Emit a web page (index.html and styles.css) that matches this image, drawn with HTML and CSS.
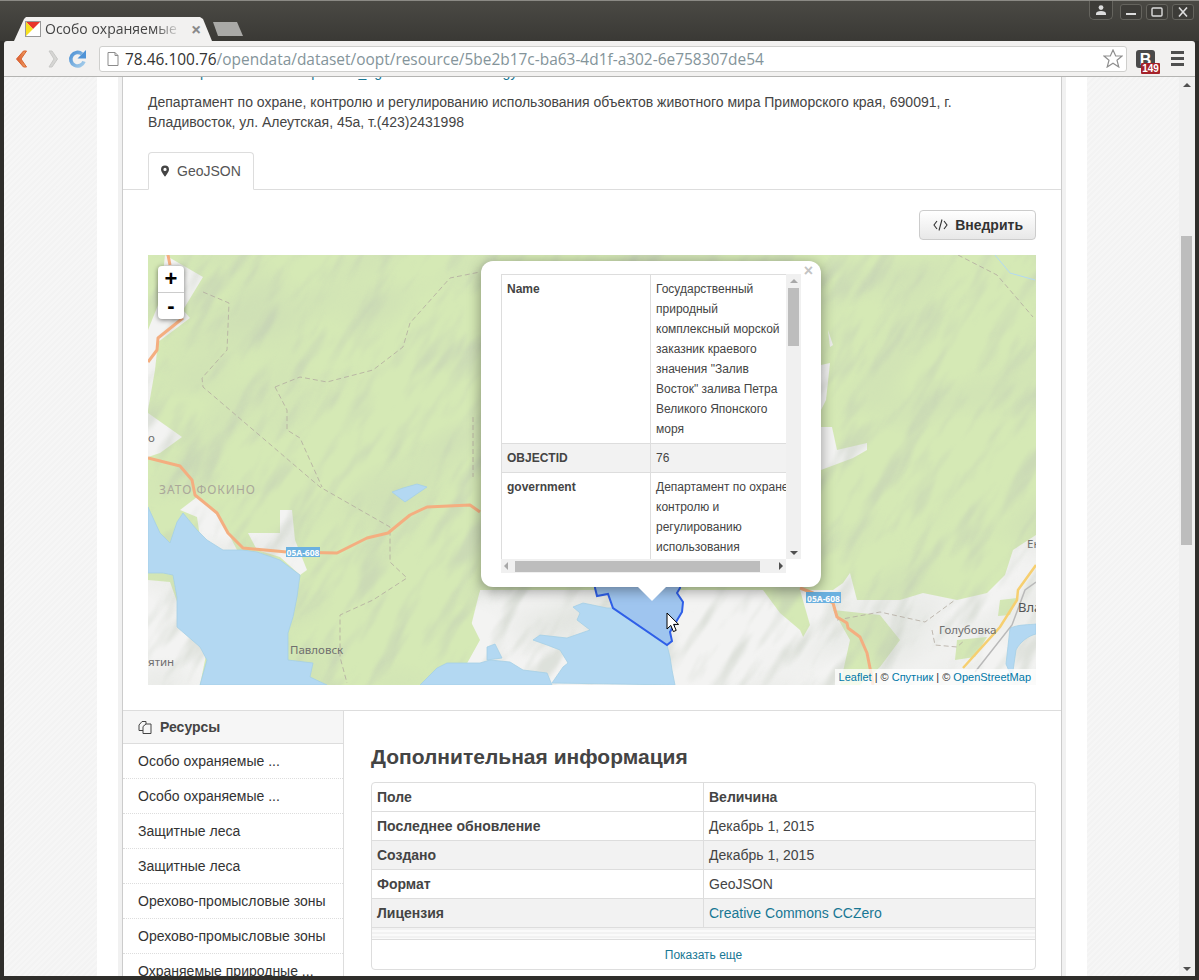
FILE: index.html
```html
<!DOCTYPE html>
<html lang="en">
<head>
    <meta charset="UTF-8">
    <title>Особо охраняемые</title>
    <link rel="stylesheet" href="styles.css">
</head>
<body>
<div class="window">
    <div class="titlebar">
        <div class="tab">
            <svg class="favicon" viewBox="0 0 16 16" width="16" height="16">
                <rect width="16" height="16" fill="#fff"/>
                <path d="M0 0H16L8 8Z" fill="#e8352c"/>
                <path d="M0 0V16L8 8Z" fill="#f7e11d"/>
                <rect x=".5" y=".5" width="15" height="15" fill="none" stroke="#999"/>
            </svg>
            <span class="tab-title">Особо охраняемые</span>
            <span class="tab-close">×</span>
        </div>
        <div class="newtab"></div>
        <div class="winbtns">
            <div class="winbtn winbtn-user">
                <svg viewBox="0 0 12 10" width="12" height="10"><circle cx="6" cy="2.6" r="2.4" fill="#ddd"/><path d="M1 10V8.5C1 7 3 6 6 6s5 1 5 2.5V10Z" fill="#ddd"/></svg>
            </div>
            <div class="winbtn"><svg viewBox="0 0 12 10" width="12" height="10"><rect x="1" y="6" width="10" height="2" fill="#ddd"/></svg></div>
            <div class="winbtn"><svg viewBox="0 0 12 10" width="12" height="10"><rect x="1" y="1" width="10" height="8" rx="1" fill="none" stroke="#ddd" stroke-width="1.4"/></svg></div>
            <div class="winbtn"><svg viewBox="0 0 12 10" width="12" height="10"><path d="M2 .5L10 9.5M10 .5L2 9.5" stroke="#ddd" stroke-width="1.6"/></svg></div>
        </div>
    </div>

    <div class="toolbar">
        <svg class="nav" viewBox="0 0 20 20" width="20" height="20">
            <defs>
                <linearGradient id="backfill" x1="0" y1="0" x2="1" y2="0"><stop offset="0" stop-color="#d9532a"/><stop offset="1" stop-color="#f0a868"/></linearGradient>
            </defs>
            <path d="M13.5 2L6.5 10L13.5 18H16.5L11 10L16.5 2Z" fill="url(#backfill)" stroke="#d9622f" stroke-width="1"/>
        </svg>
        <svg class="nav nav-forward" viewBox="0 0 20 20" width="20" height="20"><path d="M7 2H10L15.5 10L10 18H7L12 10Z" fill="#d6d6d4" stroke="#c8c8c6" stroke-width="1"/></svg>
        <svg class="nav nav-reload" viewBox="0 0 20 20" width="20" height="20">
            <defs>
                <linearGradient id="reloadfill" x1="0" y1="0" x2="1" y2="1"><stop offset="0" stop-color="#4f93d6"/><stop offset="1" stop-color="#a5cdea"/></linearGradient>
            </defs>
            <path d="M17 12.5A6.8 6.8 0 1 1 15 5" fill="none" stroke="url(#reloadfill)" stroke-width="3.6"/>
            <path d="M19 1V9.5H10.5Z" fill="#4f93d6"/>
        </svg>
        <div class="omnibox">
            <svg viewBox="0 0 12 14" width="12" height="14"><path d="M1 .5H8L11 3.5V13.5H1Z" fill="#fff" stroke="#8c8c8c"/><path d="M8 .5V3.5H11" fill="none" stroke="#8c8c8c"/></svg>
            <span class="url"><b>78.46.100.76</b>/opendata/dataset/oopt/resource/5be2b17c-ba63-4d1f-a302-6e758307de54</span>
            <svg class="star" viewBox="0 0 20 19" width="20" height="19"><path d="M10 1L12.7 7H19L14 11.2L15.8 18L10 14.2L4.2 18L6 11.2L1 7H7.3Z" fill="#fff" stroke="#8f8f8f" stroke-width="1.2"/></svg>
        </div>
        <div class="ext">
            <span class="ext-b">B</span>
            <span class="ext-badge">149</span>
        </div>
        <div class="menu"><i></i><i></i><i></i></div>
    </div>

    <div class="viewport">
        <div class="page">
            <div class="shell">
                <div class="wrapper">
                    <div class="box">
                        <p class="clipped">Web: <a href="#">http://www.admin.ru/proman_egais/document/ecology</a></p>
                        <p class="about">Департамент по охране, контролю и регулированию использования объектов животного мира Приморского края, 690091, г. Владивосток, ул. Алеутская, 45а, т.(423)2431998</p>

                        <div class="tabs">
                            <div class="tab-item">
                                <svg viewBox="0 0 10 14" width="8" height="12"><path d="M5 0A5 5 0 0 0 0 5C0 8 5 14 5 14S10 8 10 5A5 5 0 0 0 5 0ZM5 7A2 2 0 1 1 5 3A2 2 0 0 1 5 7Z" fill="#444"/></svg>
                                GeoJSON
                            </div>
                        </div>

                        <div class="preview">
                            <div class="actions">
                                <button class="btn">
                                    <svg viewBox="0 0 15 12" width="15" height="12"><path d="M4 2L1 6L4 10M11 2L14 6L11 10M9 .5L6 11.5" fill="none" stroke="#333" stroke-width="1.1"/></svg>
                                    Внедрить
                                </button>
                            </div>

                            <div class="map">
                                <svg class="map-svg" viewBox="148 255 888 430" width="888" height="430">
                                    <defs>
                                        <filter id="ridges" x="0" y="0" width="100%" height="100%">
                                            <feTurbulence type="fractalNoise" baseFrequency="0.014 0.06" numOctaves="3" seed="7"/>
                                            <feColorMatrix values="0 0 0 0 .5  0 0 0 0 .55  0 0 0 0 .47  3.6 0 0 0 -1.75"/>
                                            <feGaussianBlur stdDeviation=".8"/>
                                        </filter>
                                        <filter id="massif" x="0" y="0" width="100%" height="100%">
                                            <feTurbulence type="fractalNoise" baseFrequency="0.007 0.014" numOctaves="2" seed="23"/>
                                            <feColorMatrix values="0 0 0 0 .5  0 0 0 0 .55  0 0 0 0 .47  3 0 0 0 -1.5"/>
                                        </filter>
                                        <filter id="soft"><feGaussianBlur stdDeviation=".5"/></filter>
                                    </defs>
                                    <rect x="148" y="255" width="888" height="430" fill="#d5e9b5"/>
                                    <g fill="#f3f3f2" filter="url(#soft)">
                                        <path d="M165 255L203 277L183 310L190 318L158 342L155 370L148 410V330L160 300Z"/>
                                        <path d="M148 413L182 437L160 453L148 457Z"/>
                                        <path d="M180 510L197 497L220 517L237 550L223 553L200 537L197 517Z"/>
                                        <path d="M280 510H292L295 540L307 570L300 575L280 557L257 550L248 533H280Z"/>
                                        <path d="M148 580L170 582L180 610L207 650L200 685H148Z"/>
                                        <path d="M821 365L830 363L826 400L821 410Z"/>
                                        <path d="M821 427H832L837 450L867 443V450L853 458L821 470Z"/>
                                        <path d="M828 330L833 345L830 347Z"/>
                                        <path d="M440 685L470 630L480 590H763L780 613L800 630L825 685Z"/>
                                        <path d="M1036 535L1013 550L1005 575L987 593L957 600L923 593L900 600L877 600L857 600L850 573L843 583L833 590L800 590L810 625L790 660L800 685H1036Z"/>
                                    </g>
                                    <g fill="#d5e9b5" filter="url(#soft)">
                                        <path d="M833 610L880 615L900 640L880 667L860 685H840L850 640Z"/>
                                        <path d="M957 640L987 637L975 657L955 660Z"/>
                                        <path d="M1000 600L1017 598L1010 615L998 616Z"/>
                                        <path d="M440 590H480L470 620L480 640L455 685H420Z"/>
                                    </g>
                                    <rect x="-400" y="-400" width="2000" height="1800" filter="url(#ridges)" opacity=".38" transform="rotate(-58 592 470)"/>
                                    <rect x="-100" y="0" width="1400" height="900" filter="url(#massif)" opacity=".28" transform="rotate(-30 592 470)"/>
                                    <g fill="#b3d8f2" stroke="#a4cfe6" stroke-width=".8" filter="url(#soft)">
                                        <path d="M148 507L160 533L170 543L177 522L183 513L197 530L207 540L223 550L243 550L257 552L280 560L300 575L297 597L293 617L288 633L288 660L313 663L310 677L327 685H200L207 660L200 647L177 627L177 597L173 575L163 573H148Z"/>
                                        <path d="M392 492L403 488L417 484L427 487L405 502Z"/>
                                        <path d="M420 685L437 668L447 663H480L490 660L510 662L523 670L547 673L552 685Z"/>
                                        <path d="M552 683L563 667L568 663L560 650L547 645L533 640L540 635L567 638L590 630L577 620L580 613L573 607L583 603L607 608L613 608L667 645L670 657L672 670L675 685Z"/>
                                        <path d="M487 647L495 644L502 658L487 660Z"/>
                                        <path d="M1010 628C1020 624 1030 625 1036 624V634C1028 636 1020 642 1016 650L1012 678L1006 664Z"/>
                                    </g>
                                    <path d="M995 255L1010 273L1035 280" fill="none" stroke="#b3d8f2"/>
                                    <g fill="none" stroke="#b3a9a0" stroke-width=".8" stroke-dasharray="5 3">
                                        <path d="M203 292L229 303L227 350L202 378L203 387L320 487L390 527L390 562L407 578L373 600L340 615L340 657L347 683"/>
                                        <path d="M275 387L287 410L287 430L300 438L322 487"/>
                                        <path d="M275 387L300 377L327 382L373 370L403 347L410 323L450 278L480 272"/>
                                        <path d="M473 417V477"/>
                                        <path d="M958 255L997 275L1033 317"/>
                                        <path d="M837 620L880 612L925 622L955 600"/>
                                        <path d="M932 630L935 645L957 647L965 640"/>
                                    </g>
                                    <g fill="none" stroke="#f4ae80" stroke-width="3" stroke-linejoin="round">
                                        <path d="M148 458L180 466L192 480L195 495L217 513L228 533L243 548L287 552L337 553L367 538L388 533L410 515L427 507L470 505L480 512"/>
                                        <path d="M168 255L170 265M183 318L158 338L157 350L148 362"/>
                                        <path d="M800 588L813 593L833 603L837 617L847 623L848 628L860 637L867 653L871 673L873 685"/>
                                    </g>
                                    <path d="M963 668L1000 627L1017 600L1018 590L1036 565" fill="none" stroke="#f6cf70" stroke-width="2.5"/>
                                    <path d="M975 672L1012 625L1025 590L1036 582" fill="none" stroke="#b9b9b9" stroke-width="1.5"/>
                                    <path d="M595 560L595 588L597 596L608 594L613 608L667 645L672 641L670 632L682 612L683 602L677 593L680 588L680 560Z" fill="#9fc5ef" stroke="#2f5fe8" stroke-width="2"/>
                                    <g class="map-label">
                                        <text class="map-faint" x="159" y="494">ЗАТО ФОКИНО</text>
                                        <text x="290" y="654">Павловск</text>
                                        <text x="148" y="666">ятин</text>
                                        <text x="148" y="442">о</text>
                                        <text x="939" y="634">Голубовка</text>
                                        <text class="map-big" x="1018" y="612">Вла</text>
                                        <text x="1027" y="548">Ек</text>
                                    </g>
                                    <rect x="286" y="547" width="34" height="10" fill="#6bb1e0"/>
                                    <rect x="806" y="592" width="35" height="11" fill="#6bb1e0"/>
                                    <text class="map-shield" x="303" y="555.5">05A-608</text>
                                    <text class="map-shield" x="823.5" y="601.5">05A-608</text>
                                </svg>

                                <div class="zoom">
                                    <span>+</span>
                                    <span>-</span>
                                </div>

                                <div class="attribution"><a href="#">Leaflet</a> | © <a href="#">Спутник</a> | © <a href="#">OpenStreetMap</a></div>

                                <div class="popup">
                                    <span class="popup-close">×</span>
                                    <div class="popup-scroll">
                                        <div class="popup-clip">
                                            <table class="popup-table">
                                                <tr>
                                                    <th>Name</th>
                                                    <td>Государственный<br>природный<br>комплексный морской<br>заказник краевого<br>значения "Залив<br>Восток" залива Петра<br>Великого Японского<br>моря</td>
                                                </tr>
                                                <tr class="odd">
                                                    <th>OBJECTID</th>
                                                    <td>76</td>
                                                </tr>
                                                <tr>
                                                    <th>government</th>
                                                    <td>Департамент по охране,<br>контролю и<br>регулированию<br>использования<br>объектов</td>
                                                </tr>
                                            </table>
                                        </div>
                                        <div class="sb-v">
                                            <i class="arrow-up"></i>
                                            <b></b>
                                            <i class="arrow-down"></i>
                                        </div>
                                        <div class="sb-h">
                                            <i class="arrow-left"></i>
                                            <b></b>
                                            <i class="arrow-right"></i>
                                        </div>
                                    </div>
                                    <div class="popup-tip"></div>
                                </div>

                                <svg class="cursor" viewBox="0 0 13 21" width="13" height="21"><path d="M1 1V17L4.8 13.4L7.4 19.6L10.2 18.4L7.6 12.4H12.6Z" fill="#fff" stroke="#000"/></svg>
                            </div>
                        </div>

                        <div class="columns">
                            <div class="sidebar">
                                <div class="sidebar-head">
                                    <svg viewBox="0 0 14 13" width="14" height="13"><path d="M5 9.5H1V4L4 .5H8V3" fill="none" stroke="#444"/><path d="M5 5.5L8 3H13V12.5H5Z" fill="none" stroke="#444"/></svg>
                                    Ресурсы
                                </div>
                                <ul class="res-list">
                                    <li>Особо охраняемые ...</li>
                                    <li>Особо охраняемые ...</li>
                                    <li>Защитные леса</li>
                                    <li>Защитные леса</li>
                                    <li>Орехово-промысловые зоны</li>
                                    <li>Орехово-промысловые зоны</li>
                                    <li>Охраняемые природные ...</li>
                                </ul>
                            </div>
                            <div class="details">
                                <h3>Дополнительная информация</h3>
                                <div class="info">
                                    <table class="info-table">
                                        <tr><th>Поле</th><th>Величина</th></tr>
                                        <tr><th>Последнее обновление</th><td>Декабрь 1, 2015</td></tr>
                                        <tr class="odd"><th>Создано</th><td>Декабрь 1, 2015</td></tr>
                                        <tr><th>Формат</th><td>GeoJSON</td></tr>
                                        <tr class="odd"><th>Лицензия</th><td><a href="#">Creative Commons CCZero</a></td></tr>
                                    </table>
                                    <div class="stripes"></div>
                                    <a class="show-more" href="#">Показать еще</a>
                                </div>
                            </div>
                        </div>
                    </div>
                </div>
            </div>
        </div>
        <div class="vscroll">
            <i class="arrow-up"></i>
            <b></b>
            <i class="arrow-down"></i>
        </div>
    </div>
</div>
</body>
</html>
```

FILE: styles.css
```css
html, body {
    margin: 0;
    height: 980px;
    overflow: hidden;
    background: #2f2e2b;
}
body {
    font-family: "Liberation Sans", Arial, sans-serif;
    font-size: 14px;
    line-height: 20px;
    color: #444;
}
a {
    color: #187794;
    text-decoration: none;
}

/* browser chrome */
.window {
    display: flex;
    flex-direction: column;
    height: 976px;
    padding: 0 4px;
}
.titlebar {
    display: flex;
    height: 41px;
    margin: 0 -4px;
    padding-left: 14px;
    box-sizing: border-box;
    border-top: 1px solid #8b8a85;
    background: linear-gradient(#4a4944, #3a3935);
}
.tab {
    display: flex;
    align-items: center;
    width: 198px;
    height: 24px;
    margin-top: 16px;
    padding-left: 11px;
    box-sizing: border-box;
    background: #f2f1f0;
    clip-path: polygon(0 100%, 10px 2px, 12px 0, 186px 0, 189px 2px, 198px 100%);
    font-family: "Open Sans", sans-serif;
    font-size: 14px;
    color: #444;
}
.favicon {
    flex: none;
}
.tab-title {
    width: 137px;
    margin-left: 4px;
    overflow: hidden;
    white-space: nowrap;
    -webkit-mask-image: linear-gradient(90deg, #000 80%, transparent);
    mask-image: linear-gradient(90deg, #000 80%, transparent);
}
.tab-close {
    margin-left: 9px;
    font-size: 18px;
    font-weight: bold;
    color: #8a8a8a;
}
.newtab {
    width: 30px;
    height: 14px;
    margin: 21px 0 0 1px;
    background: #a9a9a6;
    clip-path: polygon(0 0, 24px 0, 30px 100%, 5px 100%);
}
.winbtns {
    display: flex;
    gap: 4px;
    margin-left: auto;
    margin-top: 3px;
    padding-right: 5px;
}
.winbtn {
    display: flex;
    align-items: center;
    justify-content: center;
    width: 22px;
    height: 16px;
    box-sizing: border-box;
    border: 1px solid #65645e;
    border-radius: 3px;
    background: #3d3c38;
}
.winbtn-user {
    width: 24px;
    height: 19px;
    margin: -3px 3px 0 0;
    border-top: 0;
    border-radius: 0 0 5px 5px;
}
.toolbar {
    display: flex;
    align-items: center;
    height: 36px;
    box-sizing: border-box;
    padding: 0 11px 0 6px;
    border-bottom: 1px solid #b4b4b2;
    border-radius: 3px 3px 0 0;
    background: #f2f1f0;
}
.nav {
    flex: none;
    margin-right: 11px;
}
.nav-forward {
    margin-left: 1px;
    margin-right: 5px;
}
.nav-reload {
    margin-right: 12px;
}
.omnibox {
    display: flex;
    align-items: center;
    width: 1028px;
    height: 26px;
    box-sizing: border-box;
    padding: 0 3px 0 7px;
    border: 1px solid #cfcfcd;
    border-radius: 3px;
    background: #fff;
}
.url {
    margin-left: 6px;
    font-family: "Open Sans", sans-serif;
    font-size: 15.45px;
    color: #84949a;
    white-space: nowrap;
}
.url b {
    font-weight: normal;
    color: #333;
}
.star {
    margin-left: auto;
}
.ext {
    position: relative;
    width: 19px;
    height: 18px;
    margin-left: 9px;
    border-radius: 3px;
    background: #4a4a4a;
    text-align: center;
}
.ext-b {
    font-size: 16px;
    font-weight: bold;
    line-height: 18px;
    color: #fff;
}
.ext-badge {
    position: absolute;
    left: 5px;
    top: 13px;
    width: 19px;
    height: 11px;
    border-radius: 1px;
    background: #a5222a;
    font-size: 10px;
    font-weight: bold;
    line-height: 11px;
    color: #fff;
}
.menu {
    display: flex;
    flex-direction: column;
    gap: 3px;
    margin-left: 16px;
}
.menu i {
    width: 13px;
    height: 3px;
    background: #4f4f4f;
}
.viewport {
    display: flex;
    flex: 1;
    min-height: 0;
}
.page {
    flex: 1;
    overflow: hidden;
    padding: 0 92px 0 93px;
    background: repeating-linear-gradient(-45deg, #f6f6f6 0 2px, #f3f3f3 2px 4px);
}
.shell {
    height: 100%;
    padding: 0 21px;
    background: #fff;
}
.vscroll {
    display: flex;
    flex: none;
    flex-direction: column;
    align-items: center;
    position: relative;
    width: 16px;
    background: #f0f0f0;
}
.vscroll b {
    position: absolute;
    top: 159px;
    left: 2px;
    width: 11px;
    height: 309px;
    background: #bdbdbd;
}
.vscroll .arrow-up {
    margin-top: 6px;
}
.vscroll .arrow-down {
    margin-top: auto;
    margin-bottom: 5px;
}

/* scrollbar arrows */
.arrow-up, .arrow-down, .arrow-left, .arrow-right {
    display: block;
    width: 0;
    height: 0;
    border: 4px solid transparent;
}
.arrow-up {
    border-top: 0;
    border-bottom-color: #505050;
}
.arrow-down {
    border-bottom: 0;
    border-top-color: #505050;
}
.arrow-left {
    border-left: 0;
    border-right-color: #a8a8a8;
}
.arrow-right {
    border-right: 0;
    border-left-color: #505050;
}

/* page */
.wrapper {
    height: 100%;
    padding: 0 4px;
    background: #f1f1f1;
}
.box {
    height: 100%;
    overflow: hidden;
    border-left: 1px solid #ccc;
    border-right: 1px solid #ccc;
    background: #fff;
}
.clipped {
    margin: -15px 25px 10px;
}
.about {
    margin: 0 25px 20px;
}
.tabs {
    height: 37px;
    padding-left: 25px;
    border-bottom: 1px solid #ddd;
}
.tab-item {
    display: inline-flex;
    align-items: center;
    gap: 8px;
    height: 38px;
    box-sizing: border-box;
    padding: 0 12px 0 12px;
    border: 1px solid #ddd;
    border-bottom-color: #fff;
    border-radius: 4px 4px 0 0;
    background: #fff;
    color: #555;
}
.preview {
    padding: 20px 25px 25px;
    border-bottom: 1px solid #ddd;
}
.actions {
    display: flex;
    justify-content: flex-end;
    margin-bottom: 15px;
}
.btn {
    display: flex;
    align-items: center;
    gap: 7px;
    height: 30px;
    padding: 0 12px 0 13px;
    border: 1px solid #ccc;
    border-radius: 4px;
    background: linear-gradient(#fff, #e8e8e8);
    font: bold 14px "Liberation Sans", Arial, sans-serif;
    color: #333;
}

/* map */
.map {
    position: relative;
    width: 888px;
    height: 430px;
    overflow: hidden;
}
.map-svg {
    display: block;
}
.map-label text {
    font-family: "Noto Sans", sans-serif;
    font-size: 11.5px;
    fill: #6f6f6f;
}
.map-label .map-faint {
    font-size: 12px;
    letter-spacing: 1px;
    fill: #aaa79a;
}
.map-label .map-big {
    font-size: 13px;
    fill: #555;
}
.map-shield {
    font-family: "Noto Sans", sans-serif;
    font-size: 8.5px;
    font-weight: bold;
    text-anchor: middle;
    fill: #fff;
}
.zoom {
    position: absolute;
    left: 10px;
    top: 11px;
    display: flex;
    flex-direction: column;
    width: 26px;
    border-radius: 4px;
    background: #fff;
    box-shadow: 0 1px 5px rgba(0, 0, 0, .5);
    font-size: 22px;
    font-weight: bold;
    line-height: 26px;
    color: #000;
    text-align: center;
}
.zoom span {
    height: 26px;
}
.zoom span:first-child {
    border-bottom: 1px solid #ccc;
}
.attribution {
    position: absolute;
    right: 0;
    bottom: 0;
    padding: 0 5px 0 4px;
    background: rgba(255, 255, 255, .75);
    font-size: 11px;
    line-height: 16px;
    color: #333;
}
.attribution a {
    color: #0078a8;
}
.popup {
    position: absolute;
    left: 333px;
    top: 6px;
    width: 340px;
    height: 326px;
    box-sizing: border-box;
    padding: 13px 20px;
    border-radius: 12px;
    background: #fff;
    box-shadow: 0 3px 14px rgba(0, 0, 0, .4);
    font-size: 12px;
    line-height: 20px;
}
.popup-close {
    position: absolute;
    right: 8px;
    top: 0;
    font-size: 16px;
    font-weight: bold;
    color: #c3c3c3;
}
.popup-scroll {
    display: grid;
    grid-template-columns: 285px 15px;
    grid-template-rows: 285px 14px;
}
.popup-clip {
    overflow: hidden;
}
.popup-table {
    width: 330px;
    table-layout: fixed;
    border-spacing: 0;
    border-top: 0;
}
.popup-table th, .popup-table td {
    padding: 4px 5px;
    border-top: 1px solid #ddd;
    border-left: 1px solid #ddd;
    text-align: left;
    vertical-align: top;
    white-space: nowrap;
}
.popup-table th {
    width: 138px;
}
.odd th, .odd td {
    background: #f2f2f2;
}
.sb-v {
    position: relative;
    display: flex;
    flex-direction: column;
    align-items: center;
    background: #f0f0f0;
}
.sb-v b {
    position: absolute;
    top: 14px;
    left: 2px;
    width: 11px;
    height: 58px;
    background: #bdbdbd;
}
.sb-v .arrow-up {
    margin-top: 5px;
    border-bottom-color: #a8a8a8;
}
.sb-v .arrow-down {
    margin-top: auto;
    margin-bottom: 4px;
}
.sb-h {
    position: relative;
    display: flex;
    align-items: center;
    justify-content: space-between;
    padding: 0 3px;
    background: #f0f0f0;
}
.sb-h b {
    position: absolute;
    left: 14px;
    top: 2px;
    width: 245px;
    height: 11px;
    background: #bdbdbd;
}
.popup-tip {
    position: absolute;
    left: 157px;
    bottom: -14px;
    width: 0;
    height: 0;
    border-left: 14px solid transparent;
    border-right: 14px solid transparent;
    border-top: 14px solid #fff;
}
.cursor {
    position: absolute;
    left: 518px;
    top: 357px;
}

/* resources and extra info */
.columns {
    display: flex;
}
.sidebar {
    flex: none;
    width: 221px;
    box-sizing: border-box;
    border-right: 1px solid #ddd;
}
.sidebar-head {
    display: flex;
    align-items: center;
    gap: 8px;
    height: 33px;
    box-sizing: border-box;
    padding-left: 15px;
    border-bottom: 1px solid #ddd;
    background: #f6f6f6;
    font-weight: bold;
}
.res-list {
    margin: 0;
    padding: 0;
    list-style: none;
}
.res-list li {
    height: 35px;
    box-sizing: border-box;
    padding: 7px 15px;
    border-bottom: 1px dotted #ddd;
    color: #333;
}
.details {
    flex: 1;
    padding: 35px 25px 0 27px;
}
.details h3 {
    margin: 0 0 14px;
    font-size: 21px;
    line-height: 22px;
}
.info {
    border: 1px solid #ddd;
    border-radius: 4px;
}
.info-table {
    width: 100%;
    table-layout: fixed;
    border-spacing: 0;
}
.info-table th, .info-table td {
    height: 20px;
    padding: 4px 5px;
    border-top: 1px solid #ddd;
    text-align: left;
    font-weight: normal;
}
.info-table th {
    font-weight: bold;
}
.info-table tr:first-child th {
    border-top: 0;
}
.info-table th:first-child {
    width: 321px;
}
.info-table th + th, .info-table td {
    border-left: 1px solid #ddd;
}
.stripes {
    height: 11px;
    border-top: 1px solid #ddd;
    border-bottom: 1px solid #ddd;
    background: repeating-linear-gradient(#f2f2f2 0 2px, #fafafa 2px 4px);
}
.show-more {
    display: block;
    height: 29px;
    font-size: 12px;
    line-height: 30px;
    text-align: center;
}
```
